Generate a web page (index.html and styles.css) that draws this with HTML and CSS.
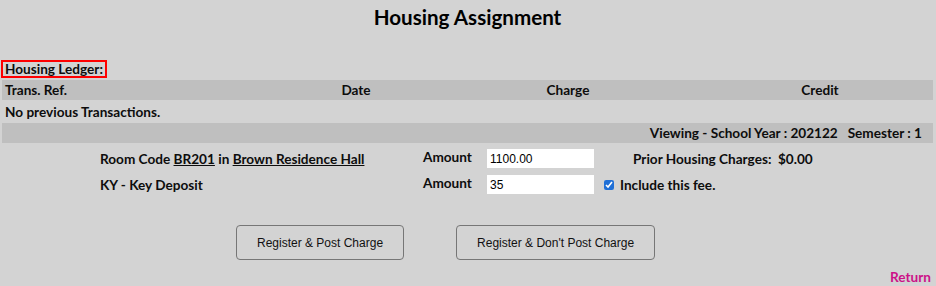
FILE: index.html
```html
<!DOCTYPE html>
<html lang="en">
<head>
<meta charset="utf-8">
<title>Housing Assignment</title>
<link rel="stylesheet" href="styles.css">
</head>
<body>
<h1 class="title">Housing Assignment</h1>
<div class="ledger-label"><span class="boxed">Housing Ledger:</span></div>
<div class="ledger">
  <div class="row head">
    <div class="cell left">Trans. Ref.</div>
    <div class="cell">Date</div>
    <div class="cell">Charge</div>
    <div class="cell">Credit</div>
  </div>
  <div class="row empty">No previous Transactions.</div>
  <div class="row bar viewing">Viewing - School Year : 202122&nbsp;&nbsp;&nbsp;Semester : 1</div>
</div>
<div class="form">
  <div class="label">Room Code <a href="#" class="ul">BR201</a> in <a href="#" class="ul">Brown Residence Hall</a></div>
  <div class="amount">Amount</div>
  <input class="field" type="text" value="1100.00">
  <div class="prior">Prior Housing Charges:&nbsp; $0.00</div>

  <div class="label">KY - Key Deposit</div>
  <div class="amount">Amount</div>
  <input class="field" type="text" value="35">
  <label class="include"><input type="checkbox" class="check" checked><span>Include this fee.</span></label>
</div>
<div class="actions">
  <button class="btn" type="button">Register &amp; Post Charge</button>
  <button class="btn" type="button">Register &amp; Don't Post Charge</button>
</div>
<div class="return"><a href="#" class="return-link">Return</a></div>
</body>
</html>
```
FILE: styles.css
```css
html, body {
  margin: 0;
  background: #d3d3d3;
}
body {
  padding: 0 3px 0 2px;
  font-family: Lato, "DejaVu Sans", sans-serif;
  font-weight: 700;
  font-size: 13.6px;
  color: #0d0d0d;
}
.title {
  margin: 0 0 31px 0;
  padding-top: 5px;
  font-size: 20.6px;
  line-height: 24px;
  text-align: center;
  font-weight: 700;
  color: #000;
}
.ledger-label {
  height: 18px;
  margin-left: -1px;
}
.boxed {
  display: inline-block;
  border: 2px solid #ff0000;
  padding: 0 2px 0 2px;
  line-height: 14px;
}
.ledger {
  margin-top: 2px;
  display: flex;
  flex-direction: column;
  gap: 2px;
}
.row {
  display: flex;
  align-items: center;
}
.head {
  height: 20px;
  background: #bfbfbf;
  display: grid;
  grid-template-columns: 281px 146px 278px 226px;
}
.cell {
  text-align: center;
}
.cell.left {
  text-align: left;
  padding-left: 3px;
}
.empty {
  height: 19px;
  padding-left: 3px;
}
.bar {
  height: 20px;
  background: #bfbfbf;
}
.viewing {
  justify-content: flex-end;
  padding-right: 11px;
}
.form {
  margin-top: 6px;
  padding-left: 98px;
  display: grid;
  grid-template-columns: 323px 64px 107px auto;
  grid-auto-rows: 19px;
  row-gap: 7px;
  align-items: center;
}
.ul {
  color: inherit;
  text-decoration: underline;
}
.amount {
  align-self: start;
}
.field {
  box-sizing: border-box;
  width: 107px;
  height: 19px;
  margin: 0;
  border: 0;
  padding: 0 3px;
  background: #fff;
  font-family: "Liberation Sans", Arial, sans-serif;
  font-size: 12px;
  color: #000;
  outline: none;
}
.prior {
  padding-left: 39px;
}
.include {
  display: flex;
  align-items: center;
  padding-left: 10px;
  gap: 6px;
}
.check {
  width: 10px;
  height: 10px;
  margin: 1px 0 0 0;
  accent-color: #1f6fd6;
}
.actions {
  margin-top: 31px;
  padding-left: 234px;
  display: flex;
  gap: 52px;
}
.btn {
  height: 35px;
  padding: 0 20px;
  border: 1px solid #767676;
  border-radius: 4px;
  background: transparent;
  font-family: "Liberation Sans", Arial, sans-serif;
  font-size: 12px;
  font-weight: 400;
  color: #111;
}
.return {
  margin-top: 7px;
  text-align: right;
  padding-right: 2px;
  line-height: 20px;
}
.return-link {
  color: #cc1188;
  text-decoration: none;
}
```
